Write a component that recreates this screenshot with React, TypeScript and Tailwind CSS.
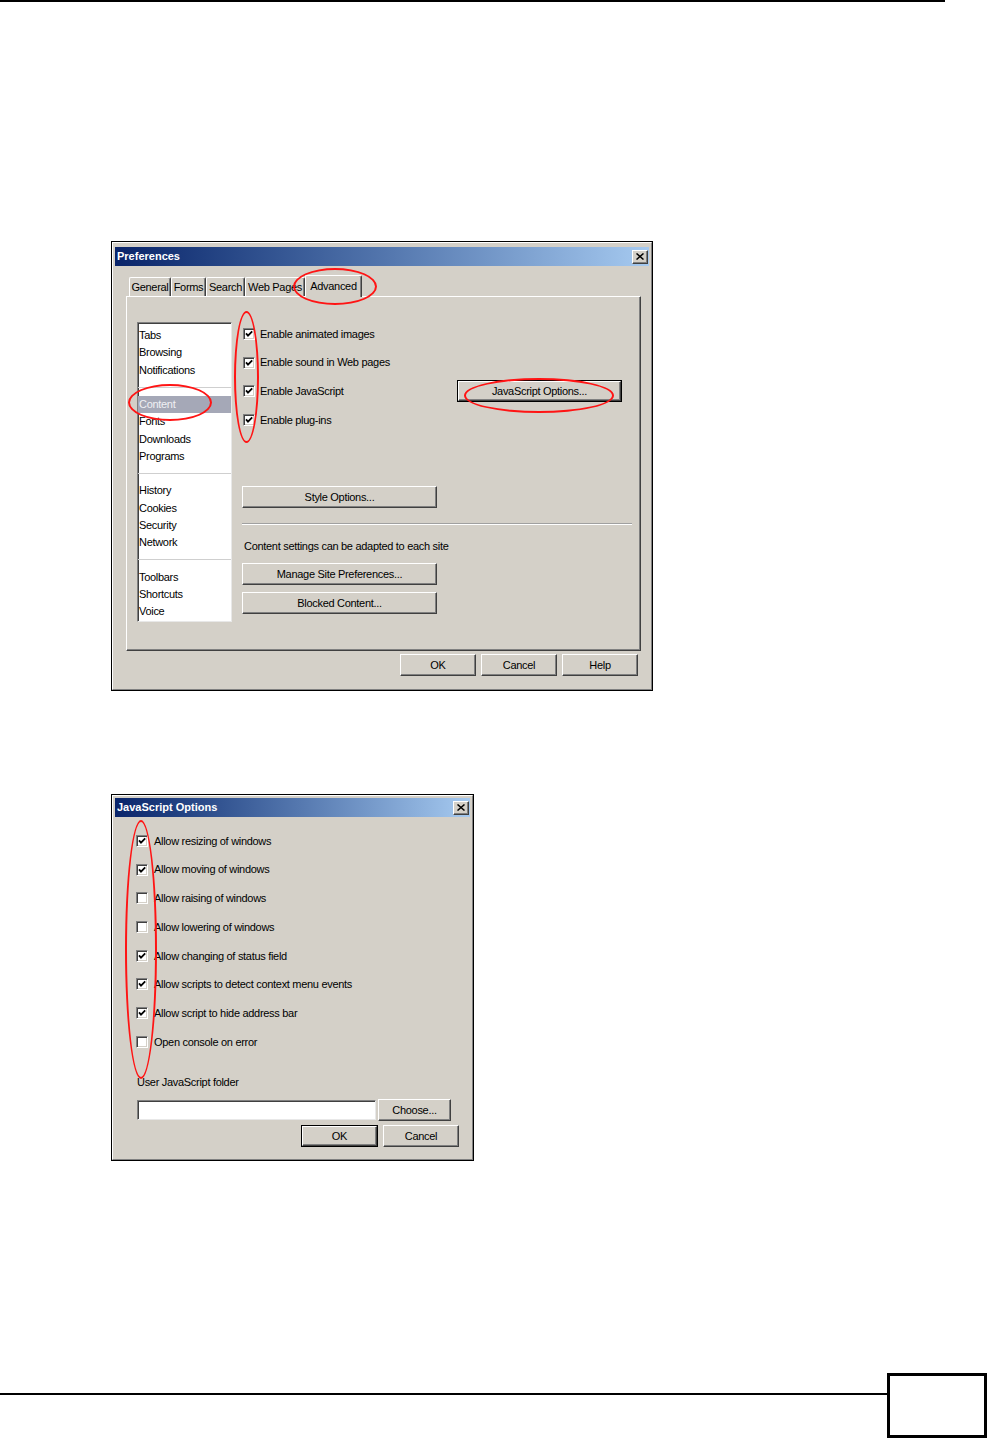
import React from 'react';

const txt = 'text-[11px] tracking-[-0.3px] text-black';

function Btn({ className = '', def = false, children }: { className?: string; def?: boolean; children: React.ReactNode }) {
  const face =
    'flex items-center justify-center bg-[#d4d0c8] border border-t-white border-l-white border-r-[#404040] border-b-[#404040] shadow-[inset_-1px_-1px_0_#808080] ' +
    txt;
  if (def)
    return (
      <div className={`border border-black shrink-0 ${className}`}>
        <div className={`${face} w-full h-full`}>{children}</div>
      </div>
    );
  return <div className={`${face} shrink-0 ${className}`}>{children}</div>;
}

function Check({ on }: { on: boolean }) {
  return (
    <div className="w-[12px] h-[12px] shrink-0 bg-white border border-t-[#808080] border-l-[#808080] border-r-white border-b-white shadow-[inset_1px_1px_0_#404040,inset_-1px_-1px_0_#d4d0c8]">
      {on && (
        <svg viewBox="0 0 10 10" className="w-full h-full">
          <path d="M2 4.4 L4 6.6 L8.2 2.4" stroke="black" strokeWidth="1.8" fill="none" />
        </svg>
      )}
    </div>
  );
}

function TitleBar({ title }: { title: string }) {
  return (
    <div className="h-[19px] flex items-center justify-between pl-[2px] pr-[1px] bg-linear-to-r from-[#0a246a] to-[#a6caf0]">
      <span className="text-white font-bold text-[11px]">{title}</span>
      <div className="w-[16px] h-[14px] bg-[#d4d0c8] border border-t-white border-l-white border-r-[#404040] border-b-[#404040] shadow-[inset_-1px_-1px_0_#808080] flex items-center justify-center">
        <svg viewBox="0 0 8 7" className="w-[8px] h-[7px]">
          <path d="M0.5 0.5 L7.5 6.5 M7.5 0.5 L0.5 6.5" stroke="black" strokeWidth="1.5" />
        </svg>
      </div>
    </div>
  );
}

function Ring({ className }: { className: string }) {
  return <div className={`absolute border-2 border-[#ff1414] rounded-[50%] ${className}`} />;
}

function Tab({ label, className, sel = false }: { label: string; className: string; sel?: boolean }) {
  return (
    <div
      className={`flex items-center justify-center bg-[#d4d0c8] border-t border-l border-t-white border-l-white border-r border-r-[#404040] shadow-[inset_-1px_0_0_#808080] rounded-t-[2px] ${txt} ${
        sel ? 'h-[22px] -mb-[1px] relative z-10' : 'h-[19px]'
      } ${className}`}
    >
      {label}
    </div>
  );
}

const groups = [
  ['Tabs', 'Browsing', 'Notifications'],
  ['Content', 'Fonts', 'Downloads', 'Programs'],
  ['History', 'Cookies', 'Security', 'Network'],
  ['Toolbars', 'Shortcuts', 'Voice'],
];

const enable = ['Enable animated images', 'Enable sound in Web pages', 'Enable JavaScript', 'Enable plug-ins'];

const jsOpts: [string, boolean][] = [
  ['Allow resizing of windows', true],
  ['Allow moving of windows', true],
  ['Allow raising of windows', false],
  ['Allow lowering of windows', false],
  ['Allow changing of status field', true],
  ['Allow scripts to detect context menu events', true],
  ['Allow script to hide address bar', true],
  ['Open console on error', false],
];

function Preferences() {
  return (
    <div className="relative ml-[111px] mt-[239px] w-[542px] h-[450px] border border-black bg-[#d4d0c8]">
      <div className="h-full border border-t-white border-l-white border-r-[#808080] border-b-[#808080] px-[2px] pt-[4px]">
        <TitleBar title="Preferences" />
        <div className="mt-[9px] ml-[14px] flex items-end">
          <Tab label="General" className="w-[42px]" />
          <Tab label="Forms" className="w-[35px]" />
          <Tab label="Search" className="w-[39px]" />
          <Tab label="Web Pages" className="w-[60px]" />
          <Tab label="Advanced" className="w-[57px]" sel />
        </div>
        <div className="ml-[11px] w-[515px] h-[355px] border border-t-white border-l-white border-r-[#404040] border-b-[#404040] shadow-[inset_-1px_-1px_0_#808080] flex pl-[10px] pt-[25px]">
          <div className="w-[95px] h-[300px] bg-white border border-t-[#808080] border-l-[#808080] border-r-[#e8e8e8] border-b-[#e8e8e8] shadow-[inset_1px_1px_0_#404040] pt-[4px]">
            {groups.map((g, gi) => (
              <div key={gi}>
                {gi > 0 && (
                  <div className="h-[17.25px] flex items-center">
                    <div className="h-[1px] w-full bg-[#cfcfcf]" />
                  </div>
                )}
                {g.map((item) => (
                  <div
                    key={item}
                    className={`h-[17.25px] leading-[17.25px] pl-[1px] ${
                      item === 'Content' ? 'bg-[#a5a8b7] text-[#f0f0f4] text-[11px] tracking-[-0.3px]' : txt
                    }`}
                  >
                    {item}
                  </div>
                ))}
              </div>
            ))}
          </div>
          <div className="ml-[10px] w-[390px] flex flex-col pt-[6px]">
            <div className="flex flex-col gap-[16.7px] pl-[1px]">
              {enable.map((e, i) => (
                <div key={e} className="h-[12px] flex items-center">
                  <Check on />
                  <span className={`ml-[5px] flex-1 ${txt}`}>{e}</span>
                  {i === 2 && (
                    <Btn def className="w-[165px] h-[22px] mr-[10px]">
                      JavaScript Options...
                    </Btn>
                  )}
                </div>
              ))}
            </div>
            <Btn className="mt-[60px] w-[195px] h-[22px]">Style Options...</Btn>
            <div className="mt-[15px] h-[2px] border-t border-t-[#a0a0a0] border-b border-b-white" />
            <div className={`mt-[15px] h-[13px] leading-[13px] pl-[2px] ${txt}`}>Content settings can be adapted to each site</div>
            <Btn className="mt-[10px] w-[195px] h-[22px]">Manage Site Preferences...</Btn>
            <Btn className="mt-[7px] w-[195px] h-[22px]">Blocked Content...</Btn>
          </div>
        </div>
        <div className="mt-[3px] ml-[285px] flex gap-[5px]">
          <Btn className="w-[76px] h-[22px]">OK</Btn>
          <Btn className="w-[76px] h-[22px]">Cancel</Btn>
          <Btn className="w-[76px] h-[22px]">Help</Btn>
        </div>
      </div>
      <Ring className="left-[181px] top-[26px] w-[84px] h-[37px]" />
      <Ring className="left-[16px] top-[142px] w-[84px] h-[37px]" />
      <Ring className="left-[122px] top-[69px] w-[25px] h-[132px]" />
      <Ring className="left-[352px] top-[136px] w-[150px] h-[35px]" />
    </div>
  );
}

function JsOptions() {
  return (
    <div className="relative ml-[111px] mt-[103px] w-[363px] h-[367px] border border-black bg-[#d4d0c8]">
      <div className="h-full border border-t-white border-l-white border-r-[#808080] border-b-[#808080] px-[2px] pt-[2px]">
        <TitleBar title="JavaScript Options" />
        <div className="pl-[21px] pt-[18px] flex flex-col">
          <div className="flex flex-col gap-[16.7px]">
            {jsOpts.map(([label, on]) => (
              <div key={label} className="h-[12px] flex items-center">
                <Check on={on} />
                <span className={`ml-[6px] ${txt}`}>{label}</span>
              </div>
            ))}
          </div>
          <div className={`mt-[28px] ml-[1px] h-[13px] leading-[13px] ${txt}`}>User JavaScript folder</div>
          <div className="mt-[10px] ml-[1px] flex items-center gap-[2px]">
            <div className="w-[239px] h-[20px] bg-white border border-t-[#808080] border-l-[#808080] border-r-[#e8e8e8] border-b-[#e8e8e8] shadow-[inset_1px_1px_0_#404040]" />
            <Btn className="w-[73px] h-[22px]">Choose...</Btn>
          </div>
          <div className="mt-[4px] ml-[165px] flex gap-[5px]">
            <Btn def className="w-[77px] h-[22px]">
              OK
            </Btn>
            <Btn className="w-[76px] h-[22px]">Cancel</Btn>
          </div>
        </div>
      </div>
      <Ring className="left-[13px] top-[25px] w-[32px] h-[259px]" />
    </div>
  );
}

export default function App() {
  return (
    <div className="w-[987px] h-[1438px] bg-white flex flex-col font-['Liberation_Sans',Arial,sans-serif] overflow-hidden">
      <div className="w-[945px] h-[2px] bg-black" />
      <Preferences />
      <JsOptions />
      <div className="mt-[212px] flex items-start">
        <div className="flex-1 h-[2px] mt-[20px] bg-black" />
        <div className="w-[100px] h-[65px] border-[3px] border-black" />
      </div>
    </div>
  );
}
